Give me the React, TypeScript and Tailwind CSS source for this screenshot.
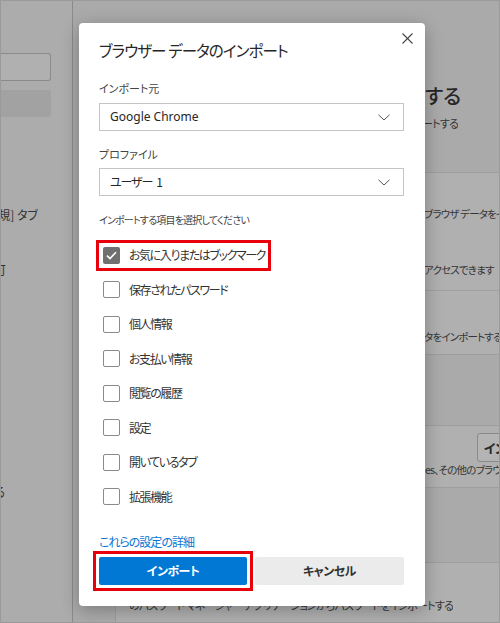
import React from "react";

const JP = "font-['Noto_Sans_CJK_JP',sans-serif] [font-feature-settings:'palt']";

function Chevron() {
  return (
    <svg width="12" height="7" viewBox="0 0 12 7" className="shrink-0">
      <polyline points="0.5,0.8 6,6 11.5,0.8" fill="none" stroke="#555" strokeWidth="1" />
    </svg>
  );
}

function Select({ value, textClass }: { value: React.ReactNode; textClass: string }) {
  return (
    <div className="flex h-[28px] items-center justify-between border border-[#c4c4c4] bg-white pl-[10px] pr-[13px]">
      <span className={`whitespace-pre text-[#262626] [font-feature-settings:'palt'] ${textClass}`}>{value}</span>
      <Chevron />
    </div>
  );
}

function Check({ checked }: { checked?: boolean }) {
  if (checked) {
    return (
      <div className="flex h-[17px] w-[17px] shrink-0 items-center justify-center rounded-[2px] bg-[#707070]">
        <svg width="11" height="9" viewBox="0 0 11 9">
          <polyline points="1,4.6 4,7.5 10,1.2" fill="none" stroke="#fff" strokeWidth="1.6" />
        </svg>
      </div>
    );
  }
  return <div className="h-[17px] w-[17px] shrink-0 rounded-[2px] border border-[#8a8a8a] bg-white" />;
}

const items = [
  "お気に入りまたはブックマーク",
  "保存されたパスワード",
  "個人情報",
  "お支払い情報",
  "閲覧の履歴",
  "設定",
  "開いているタブ",
  "拡張機能",
];

function ClipEnd({ width, text, className }: { width: string; text: string; className?: string }) {
  return (
    <div className={`flex justify-end overflow-hidden ${width} ${className ?? ""}`}>
      <span className="shrink-0 whitespace-nowrap">{text}</span>
    </div>
  );
}

export default function App() {
  return (
    <div className={`relative flex h-[623px] w-[500px] overflow-hidden border border-[#9a9a9a] bg-[#aaaaaa] ${JP}`}>
      {/* sidebar */}
      <div className="flex w-[72px] shrink-0 flex-col border-r border-[#8a8a8a] bg-[#acacac] text-[12px] leading-[18px] text-[#333]">
        <div className="mt-[52px] h-[28px] w-[50px] rounded-r-[3px] border border-l-0 border-[#8a8a8a] bg-[#b0b0b0]" />
        <div className="mt-[9px] h-[27px] w-[50px] rounded-r-[3px] bg-[#a2a2a2]" />
        <ClipEnd width="w-[37px]" text="新しい [新規] タブ" className="mt-[89px]" />
        <ClipEnd width="w-[5px]" text="を許可" className="mt-[37px]" />
        <ClipEnd width="w-[4px]" text="リセットする" className="mt-[204px]" />
      </div>

      {/* main background */}
      <div className="flex flex-1 flex-col text-[10.5px] leading-[18px] tracking-[-0.8px] text-[#353535]">
        <div className="h-[171px] shrink-0">
          <ClipEnd
            width="w-[388px]"
            text="インポートまたは保存する"
            className="pt-[81px] text-[20px] font-medium leading-[28px] tracking-[0px] text-[#262626]"
          />
          <ClipEnd width="w-[385px]" text="データをインポートする" className="mt-[4px] text-[11px]" />
        </div>

        <div className="ml-[42px] flex flex-col overflow-hidden border-y border-l border-[#9e9e9e] bg-[#b0b0b0]">
          <div className="h-[118px] border-b border-[#a0a0a0]">
            <div className="whitespace-nowrap pl-[308px] pt-[32px]">ブラウザ データをインポートします</div>
            <div className="mt-[38px] whitespace-nowrap pl-[308px]">アクセスできます</div>
          </div>
          <div className="h-[63px]">
            <div className="whitespace-nowrap pl-[308px] pt-[37px]">タをインポートする</div>
          </div>
        </div>

        <div className="ml-[42px] mt-[70px] flex h-[63px] flex-col overflow-hidden border-y border-l border-[#9e9e9e] bg-[#b0b0b0]">
          <div className="flex pl-[361px] pt-[7px]">
            <div className="flex h-[29px] w-[60px] shrink-0 items-center rounded-[3px] border border-[#8a8a8a] bg-[#b4b4b4] pl-[6px] text-[13px] font-bold whitespace-nowrap text-[#2a2a2a]">
              インポート
            </div>
          </div>
          <div className="whitespace-nowrap pl-[309px] leading-[16px]">es、その他のブラウザからインポート</div>
        </div>

        <div className="ml-[42px] mt-[74px] flex-1 border-t border-l border-[#9e9e9e] bg-[#b0b0b0] pl-[14px]">
          <ClipEnd
            width="w-[323px]"
            text="サードパーティのパスワード マネージャー アプリケーションからパスワードをインポートする"
            className="pt-[33px] text-[11px]"
          />
        </div>
      </div>

      {/* dialog */}
      <div className="absolute left-[78px] top-[22px] flex h-[583px] w-[346px] flex-col rounded-[4px] bg-white shadow-[0_4px_18px_rgba(0,0,0,0.28)]">
        <div className="flex justify-between">
          <div className="pl-[20px] pt-[15px] text-[15.5px] leading-[24px] tracking-[-0.9px] text-[#262626]">
            ブラウザー データのインポート
          </div>
          <div className="pr-[12px] pt-[10px]">
            <svg width="11" height="11" viewBox="0 0 11 11">
              <line x1="0.5" y1="0.5" x2="10.5" y2="10.5" stroke="#444" strokeWidth="1.1" />
              <line x1="10.5" y1="0.5" x2="0.5" y2="10.5" stroke="#444" strokeWidth="1.1" />
            </svg>
          </div>
        </div>

        <div className="flex flex-col pl-[20px] pr-[21px]">
          <div className="mt-[18px] text-[11px] leading-[16px] text-[#444]">インポート元</div>
          <div className="mt-[7px]">
            <Select value="Google Chrome" textClass="font-['Noto_Sans',sans-serif] text-[12px]" />
          </div>
          <div className="mt-[15px] text-[11px] leading-[16px] text-[#444]">プロファイル</div>
          <div className="mt-[6px]">
            <Select
              value={
                <>
                  ユーザー<span className="ml-[4px]">1</span>
                </>
              }
              textClass="text-[12px] tracking-[-1.1px]"
            />
          </div>
          <div className="mt-[16px] text-[10px] leading-[16px] tracking-[-0.8px] text-[#444]">
            インポートする項目を選択してください
          </div>

          <div className="mt-[10px] flex flex-col">
            {items.map((label, i) => (
              <div key={label} className="flex h-[34.5px] items-center">
                <div
                  className={`-ml-[3px] flex h-[31px] items-center gap-[9px] border-[3px] pl-[4px] pr-[3px] ${
                    i === 0 ? "border-[#e8000b]" : "border-transparent"
                  }`}
                >
                  <Check checked={i === 0} />
                  <span className="whitespace-nowrap text-[12px] tracking-[-1.4px] text-[#333]">{label}</span>
                </div>
              </div>
            ))}
          </div>

          <div className="mt-[19px] text-[12px] leading-[18px] tracking-[-1px] text-[#0a74d1]">これらの設定の詳細</div>

          <div className="-ml-[6px] flex items-center">
            <div className="border-[3px] border-[#e8000b] p-[3px]">
              <div className="flex h-[28px] w-[148px] items-center justify-center rounded-[2px] bg-[#0078d4] text-[12px] font-bold tracking-[-0.5px] text-white">
                インポート
              </div>
            </div>
            <div className="ml-[2px] flex h-[28px] flex-1 items-center justify-center rounded-[2px] bg-[#ebebeb] text-[12px] font-bold tracking-[-0.5px] text-[#333]">
              キャンセル
            </div>
          </div>
        </div>
      </div>
    </div>
  );
}
